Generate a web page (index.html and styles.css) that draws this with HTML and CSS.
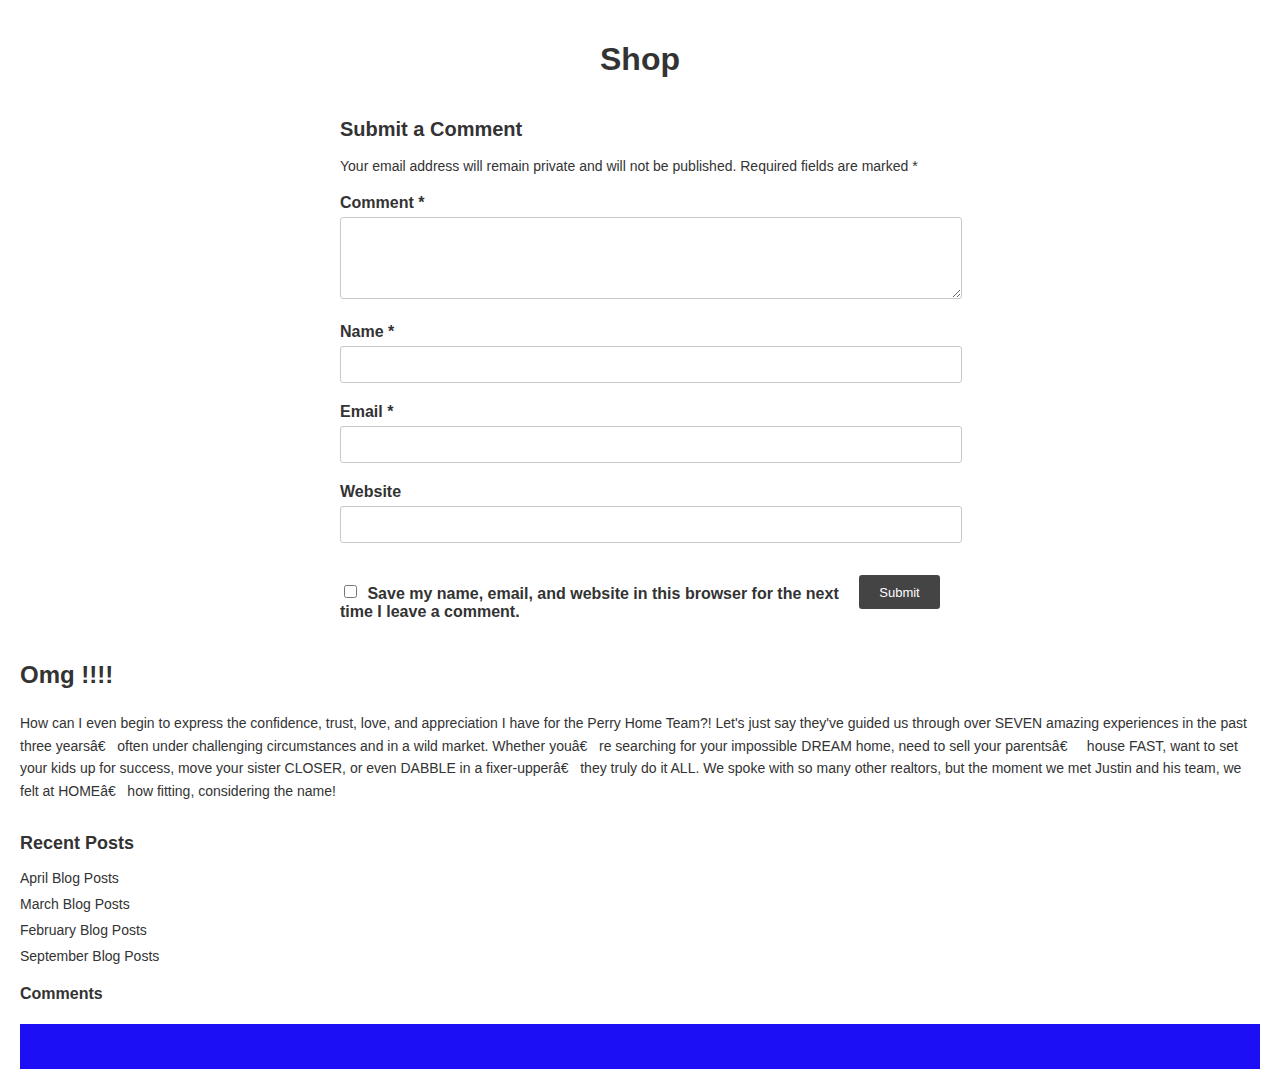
FILE: index.html
```html
<!DOCTYPE html>
<html>
<head>
<meta charset="utf-8">
<link rel="stylesheet" href="styles.css">
</head>
<body>
<div class="page">
  <h1 class="title">Shop</h1>
  <form class="comment-form">
    <h3 class="form-title">Submit a Comment</h3>
    <p class="note">Your email address will remain private and will not be published. Required fields are marked *</p>
    <div class="field">
      <label class="lbl">Comment *</label>
      <textarea class="txt"></textarea>
    </div>
    <div class="field">
      <label class="lbl">Name *</label>
      <input class="inp" type="text">
    </div>
    <div class="field">
      <label class="lbl">Email *</label>
      <input class="inp" type="text">
    </div>
    <div class="field">
      <label class="lbl">Website</label>
      <input class="inp" type="text">
    </div>
    <div class="save-row">
      <label class="save"><input type="checkbox" class="cb"> Save my name, email, and website in this browser for the next time I leave a comment.</label>
      <button type="button" class="btn">Submit</button>
    </div>
  </form>
  <h2 class="review-title">Omg !!!!</h2>
  <p class="review">How can I even begin to express the confidence, trust, love, and appreciation I have for the Perry Home Team?! Let's just say they've guided us through over SEVEN amazing experiences in the past three yearsâ€&nbsp;&nbsp;&nbsp;often under challenging circumstances and in a wild market. Whether youâ€&nbsp;&nbsp;&nbsp;re searching for your impossible DREAM home, need to sell your parentsâ€&nbsp;&nbsp;&nbsp;&nbsp; house FAST, want to set your kids up for success, move your sister CLOSER, or even DABBLE in a fixer-upperâ€&nbsp;&nbsp;&nbsp;they truly do it ALL. We spoke with so many other realtors, but the moment we met Justin and his team, we felt at HOMEâ€&nbsp;&nbsp;&nbsp;how fitting, considering the name!</p>
  <h3 class="side-title">Recent Posts</h3>
  <ul class="posts">
    <li>April Blog Posts</li>
    <li>March Blog Posts</li>
    <li>February Blog Posts</li>
    <li>September Blog Posts</li>
  </ul>
  <h4 class="comments-title">Comments</h4>
  <div class="bar"></div>
</div>
</body>
</html>
```

FILE: styles.css
```css
* { box-sizing: border-box; }
html, body { margin: 0; padding: 0; background: #fff; }
body {
  font-family: "Liberation Sans", Arial, sans-serif;
  color: #333;
  font-size: 14px;
}
.page { padding: 20px 20px 20px; }
.title {
  font-size: 32px;
  font-weight: bold;
  text-align: center;
  margin: 19px 0 0;
  line-height: 40px;
}
.comment-form {
  width: 600px;
  margin: 38px 0 0 320px;
}
.form-title {
  font-size: 20px;
  margin: 0;
  line-height: 24px;
}
.note {
  margin: 15px 0 0;
  line-height: 20px;
  font-size: 14px;
}
.field { display: flex; flex-direction: column; margin-top: 16px; }
.field + .field { margin-top: 18px; }
.lbl {
  display: block;
  font-size: 16px;
  font-weight: bold;
  line-height: 22px;
  margin-bottom: 3px;
}
.txt, .inp {
  box-sizing: content-box;
  display: block;
  width: 100%;
  padding: 0 10px;
  border: 1px solid #c8c8c8;
  border-radius: 3px;
  font-family: inherit;
  font-size: 14px;
  margin: 0;
}
.txt { height: 80px; resize: vertical; margin-bottom: 4px; }
.inp { height: 35px; }
.save-row {
  display: flex;
  align-items: flex-start;
  margin-top: 32px;
}
.save {
  flex: 1;
  font-size: 16px;
  font-weight: bold;
  line-height: 18px;
  padding-top: 10px;
}
.cb { margin: 0 6px 0 4px; width: 13px; height: 13px; vertical-align: 1px; }
.btn {
  width: 81px;
  height: 34px;
  margin-left: 19px;
  background: #444;
  color: #fff;
  border: 0;
  border-radius: 3px;
  font-family: inherit;
  font-size: 13px;
}
.review-title {
  font-size: 24px;
  margin: 39px 0 0;
  line-height: 30px;
}
.review {
  margin: 22px 0 0;
  line-height: 22.7px;
  font-size: 14px;
}
.side-title {
  font-size: 18px;
  margin: 28px 0 0;
  line-height: 24px;
}
.posts {
  list-style: none;
  margin: 10px 0 0;
  padding: 0;
}
.posts li { line-height: 26px; font-size: 14px; }
.comments-title {
  font-size: 16px;
  margin: 14px 0 0;
  line-height: 22px;
}
.bar {
  height: 45px;
  background: #1d0ff5;
  margin-top: 19px;
}
```
